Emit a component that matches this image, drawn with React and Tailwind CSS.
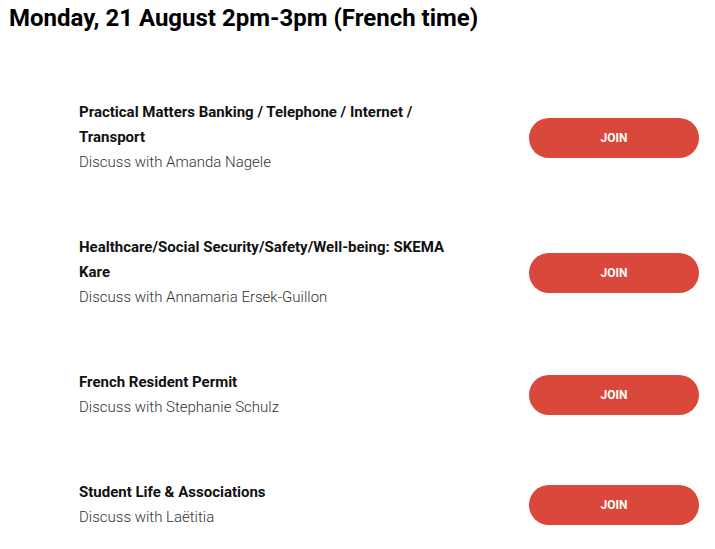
export default function App() {
  const items = [
    { title: "Practical Matters Banking / Telephone / Internet / Transport", who: "Amanda Nagele" },
    { title: "Healthcare/Social Security/Safety/Well-being: SKEMA Kare", who: "Annamaria Ersek-Guillon" },
    { title: "French Resident Permit", who: "Stephanie Schulz" },
    { title: "Student Life & Associations", who: "Laëtitia" },
  ];
  return (
    <div className="w-[715px] h-[549px] bg-white overflow-hidden" style={{ fontFamily: "Roboto, sans-serif" }}>
      <h1 className="pl-[9px] text-[24px] leading-[36px] font-bold text-black">
        Monday, 21 August 2pm-3pm (French time)
      </h1>
      <div className="mt-[34px] flex flex-col">
        {items.map((it) => (
          <div key={it.title} className="flex items-center pl-[79px] pr-[16px] py-[30px]">
            <div className="w-[380px] text-[15px] leading-[25px]">
              <div className="font-bold text-[#111]">{it.title}</div>
              <div className="font-light text-[#333]">Discuss with {it.who}</div>
            </div>
            <button className="ml-auto w-[170px] h-[40px] rounded-full bg-[#d9483b] text-white text-[12px] font-bold">
              JOIN
            </button>
          </div>
        ))}
      </div>
    </div>
  );
}
